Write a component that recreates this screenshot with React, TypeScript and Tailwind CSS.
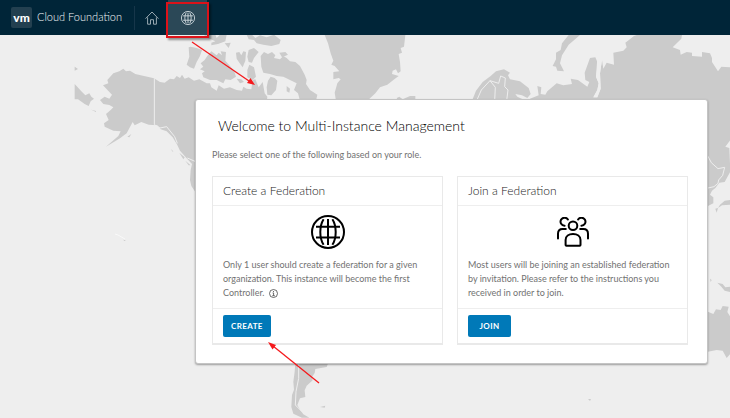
import React from "react";

type IconProps = { className?: string };

const GlobeIcon: React.FC<IconProps> = ({ className }) => (
  <svg
    viewBox="0 0 34 34"
    fill="none"
    stroke="currentColor"
    strokeWidth="2"
    className={className}
    aria-hidden="true"
  >
    <circle cx="17" cy="17" r="16" />
    <path d="M17 4v26M5 11.8h24M5 22.4h24" />
    <path d="M12.6 4.2C8.2 11 8.2 23 12.6 29.8M21.4 4.2C25.8 11 25.8 23 21.4 29.8" />
  </svg>
);

const HomeIcon: React.FC<IconProps> = ({ className }) => (
  <svg
    viewBox="0 0 14 14"
    fill="none"
    stroke="currentColor"
    strokeWidth="0.9"
    strokeLinecap="round"
    strokeLinejoin="round"
    className={className}
    aria-hidden="true"
  >
    <path d="M.8 7.4 7 1l6.2 6.4" />
    <path d="M2.6 6.8v6.4h2.9V8.7h3v4.5h2.9V6.8" />
  </svg>
);

const UsersIcon: React.FC<IconProps> = ({ className }) => (
  <svg
    viewBox="0 0 32 30"
    fill="none"
    stroke="currentColor"
    strokeWidth="2"
    strokeLinecap="round"
    className={className}
    aria-hidden="true"
  >
    <circle cx="16" cy="8.7" r="4.3" />
    <path d="M8.6 27.9v-5c0-3.7 3.2-5.9 7.4-5.9s7.5 2.2 7.5 5.9v5c0 .5-.3.8-.8.8H9.4c-.5 0-.8-.3-.8-.8Z" />
    <path d="M10.9 2.5A4 4 0 1 0 7.6 8.7" />
    <path d="M21.1 2.5A4 4 0 1 1 24.4 8.7" />
    <path d="M1 21.6v-4.8c0-3 1.8-4.7 4.6-4.7h3.2" />
    <path d="M31 21.6v-4.8c0-3-1.8-4.7-4.6-4.7h-3.2" />
  </svg>
);

const InfoIcon: React.FC<IconProps> = ({ className }) => (
  <svg
    viewBox="0 0 9 9"
    fill="none"
    stroke="currentColor"
    strokeWidth="0.8"
    className={className}
    aria-hidden="true"
  >
    <circle cx="4.5" cy="4.5" r="4" />
    <path d="M3.6 3.9h1v2.7M3.3 6.7h2.5M4.5 2v1" />
  </svg>
);

// Land masses, grouped by the part of the map they belong to
const WorldMap: React.FC = () => (
  <svg
    viewBox="0 35 730 383"
    preserveAspectRatio="xMinYMin slice"
    className="absolute inset-0 h-full w-full"
    fill="#cbcbcb"
    aria-hidden="true"
  >
    {/* Alaska, northern Canada and the Arctic islands */}
    <g transform="translate(70 30) scale(.33333)">
      <path d="M99 166 115 160 112 150 130 130 148 124 160 116 168 124 180 122 196 132 222 138 252 145 270 156 284 158 300 146 312 148 320 138 330 144 336 134 344 146 356 142 372 152 388 148 410 160 420 160 424 172 440 182 446 166 462 176 480 172 500 180 516 182 520 170 530 176 544 178 548 150 556 148 566 172 578 156 584 190 592 200 590 220 420 500 376 486 364 468 360 450 362 420 366 402 350 385 330 362 322 345 308 322 290 304 272 298 262 286 236 284 214 276 194 286 188 276 170 310 150 325 108 350 120 340 145 318 152 304 130 302 104 290 102 280 116 270 108 252 122 240 130 232 118 225 100 222 90 210 104 200 118 206 126 194 118 186Z" />
      <path d="M14 162 34 184 46 196 58 190 64 200 72 206 62 214 56 228 44 222 24 208 14 208ZM14 110 24 117 14 122ZM64 239 78 243 78 246ZM172 320 184 312 178 322ZM304 357 310 365 306 364ZM328 368 344 382 340 388ZM346 392 362 406 356 406Z" />
      <path d="M356 52 362 50 380 54 396 60 390 78 380 96 372 116 360 112 350 104 358 80Z" />
      <path d="M412 78 424 64 440 76 446 68 456 76 452 64 468 66 466 92 478 106 492 122 498 140 482 150 466 148 460 160 440 150 420 150 400 142 396 130 404 124 390 118 400 110 392 100 404 90Z" />
      <path d="M402 14 436 14 440 24 450 14 470 14 466 34 444 42 424 46 424 38 436 34 406 20ZM464 40 482 38 476 54ZM498 68 508 66 514 76 520 64 528 66 526 92 518 112 508 98 500 86ZM536 60 552 54 566 66 552 84 546 98 536 96 532 80ZM538 104 552 112 558 140 548 150 532 142 532 120ZM500 146 514 148 522 156 510 160Z" />
      <path d="M530 14 546 14 556 24 570 16 590 22 612 14 632 30 628 42 604 48 580 44 560 40 552 30 536 28ZM628 68 646 66 654 74 636 82ZM594 152 602 140 614 144 622 152 618 180 604 196 592 194 590 172ZM650 168 660 176 658 188 650 184Z" />
      <path d="M572 78 582 66 594 72 606 66 616 76 612 84 630 88 640 78 650 84 660 94 676 96 690 108 704 134 710 150 708 162 720 180 742 194 738 212 690 212 684 190 672 180 680 160 660 150 640 140 620 138 600 132 580 128 574 110Z" />
      <path
        d="M253 145V284L270 294 290 290 314 320 322 340M352 384 384 398"
        fill="none"
        stroke="#eeeeee"
        strokeWidth="3"
      />
    </g>

    {/* Greenland, Iceland and Scandinavia */}
    <g transform="translate(300 30) scale(.33333)">
      <path d="M74 15H316L312 50 302 54 306 68 296 72 300 96 302 124 294 130 288 118 278 122 276 132 296 138 280 150 262 164 240 172 226 190 202 212 108 212 104 188 112 160 122 148 116 144 100 148 100 126 118 124 104 108 94 104 100 92 92 70 84 40Z" />
      <path d="M290 204 298 200 308 208 330 198 346 198 346 212 294 212Z" />
      <path d="M516 212 528 182 548 156 572 138 588 124 612 118 630 128 624 136 630 148 660 154 686 174 692 192 682 204 666 196 646 192 652 200 678 212Z" />
      <path
        d="M530 212 544 180 570 152 586 172 584 212M570 152 596 160 602 138 616 144 614 170 624 180 620 212"
        fill="none"
        stroke="#eeeeee"
        strokeWidth="3"
      />
    </g>

    {/* Northern Russia */}
    <g transform="translate(510 30) scale(.33333)">
      <path d="M60 206 86 196 82 168 94 172 92 192 106 194 112 184 140 160 160 166 186 162 182 146 204 150 232 170 238 156 226 150 224 128 240 84 256 82 262 96 262 110 258 140 266 160 262 180 250 202 262 202 272 176 270 130 276 90 280 116 290 98 312 104 310 68 340 62 350 52 346 38 372 18 380 15H516L514 26 488 52 510 60 512 74 530 66 546 68 546 78 576 80 576 66 600 70 606 84 606 96 624 124 634 110 664 112V222H60Z" />
      <path d="M176 15 210 15 176 44 156 76 150 100 162 124 142 122 138 110 128 108 138 88 138 68 152 60 156 40Z" />
      <path
        d="M262 84 258 140 266 160 262 180 250 202 262 202 272 176 270 130 276 90Z"
        fill="#eeeeee"
      />
    </g>

    {/* East Asia and Australia */}
    <g transform="translate(690 100) scale(.33333)">
      <path d="M50 0H121V120L106 140 118 144 121 215 104 246 88 248 76 264 66 272 60 284 70 292 70 310 54 318 50 318Z" />
      <path d="M121 300V314L96 316 84 324 90 314 104 302ZM76 326 84 324 80 338ZM82 548 98 552 106 562 121 560V576L104 572 94 560ZM60 536 65 540 62 546Z" />
      <path d="M50 634 70 642 78 628 92 630 98 618 116 620 112 636 121 650V762L110 774 98 752 80 750 50 756Z" />
      <path
        d="M50 162 64 188 84 206 104 202 98 226 86 240 84 250 72 260 54 264"
        fill="none"
        stroke="#eeeeee"
        strokeWidth="3"
      />
    </g>

    {/* Southern tip of South America */}
    <g transform="translate(280 355) scale(.33333)">
      <path d="M46 20 146 20 140 36 106 42 104 54 96 66 98 76 80 92 74 106 76 126 60 130 52 150 60 164 70 178 88 188 66 188 40 176 34 156 36 120 42 104 40 80 44 50ZM120 156 136 152 134 158Z" />
      <path
        d="M56 20V70L48 110 46 150 66 170"
        fill="none"
        stroke="#eeeeee"
        strokeWidth="3"
      />
    </g>

    {/* Pacific islands */}
    <path d="M115 234 118 235 125 239" fill="none" stroke="#f9f9f9" />
    <path d="M123.5 239.5 126 241 124 241ZM588 399 591 399 590 401Z" />
  </svg>
);

type CardProps = {
  title: string;
  icon: React.ReactNode;
  action: string;
  children: React.ReactNode;
  pointer?: React.ReactNode;
};

const FederationCard: React.FC<CardProps> = ({
  title,
  icon,
  action,
  children,
  pointer,
}) => (
  <section className="flex flex-1 flex-col border border-b-2 border-[#e9e9e9] bg-white">
    <h2 className="border-b border-[#eeeeee] px-[10px] py-1 text-[12px] leading-5 font-light text-[#222222]">
      {title}
    </h2>
    <div className="flex-1 px-[10px] pt-2 pb-2">
      <div className="flex h-9 items-center justify-center text-black">
        {icon}
      </div>
      <p className="mt-2 text-[9px] leading-[14px] text-[#727272]">
        {children}
      </p>
    </div>
    <div className="border-t border-[#eeeeee] px-[10px] py-[6px]">
      <div className="relative w-fit">
        <button
          type="button"
          className="block h-[22px] min-w-[43px] rounded-[2px] bg-[#0079b8] px-2 text-[8px] font-bold tracking-wider text-white"
        >
          {action}
        </button>
        {pointer}
      </div>
    </div>
  </section>
);

const App: React.FC = () => {
  return (
    <div className="flex min-h-screen flex-col bg-[#eeeeee] font-['Lato',sans-serif]">
      <header className="relative z-10 flex h-[35px] items-center bg-[#002538] text-[#f2f5f7]">
        <div className="ml-[11px] flex size-[21px] items-center justify-center rounded-[2px] bg-[#234050] text-[12px] font-black text-white">
          vm
        </div>
        <span className="ml-[5px] w-[97px] text-[11px] font-light">
          Cloud Foundation
        </span>
        <nav className="flex h-full items-center">
          <div className="h-6 border-l border-[#16364a]" />
          <a
            href="#home"
            aria-label="Home"
            className="flex h-full w-[33px] items-center justify-center text-[#a9b8c0]"
          >
            <HomeIcon className="size-[14px]" />
          </a>
          <a
            href="#instances"
            aria-label="Multi-Instance Management"
            className="relative flex h-full w-[39px] items-center justify-center bg-[#2b4857] text-[#dfe6ea]"
          >
            <GlobeIcon className="size-[14px]" />
            <span className="absolute -left-[2px] top-[2px] h-9 w-[43px] border-2 border-[#dd1219] shadow-[2px_2px_2px_rgba(0,0,0,0.4)]" />
            <svg
              viewBox="0 0 66 46"
              className="absolute top-[41px] left-[23px] h-[46px] w-[66px]"
              aria-hidden="true"
            >
              <path d="M1 1 58 40" stroke="#f5191c" strokeWidth="1.3" />
              <path d="M64 44 56 42 59.5 37Z" fill="#f5191c" />
            </svg>
          </a>
        </nav>
      </header>

      <main className="relative flex-1">
        <WorldMap />
        <div className="relative mt-16 mr-[22px] mb-[54px] ml-[195px] rounded-[3px] border border-[#c4c4c4] bg-white pt-4 pr-[19px] pb-[18px] pl-4 shadow-[0_1px_2px_rgba(0,0,0,0.35)]">
          <h1 className="pl-[6px] text-[14px] leading-5 font-light text-black">
            Welcome to Multi-Instance Management
          </h1>
          <p className="mt-3 text-[9px] leading-[14px] text-[#727272]">
            Please select one of the following based on your role.
          </p>
          <div className="mt-[14px] flex gap-[14px]">
            <FederationCard
              title="Create a Federation"
              icon={<GlobeIcon className="size-[34px]" />}
              action="CREATE"
              pointer={
                <svg
                  viewBox="0 0 54 46"
                  className="absolute top-[25px] left-[44px] h-[46px] w-[54px]"
                  aria-hidden="true"
                >
                  <path d="M6 6 52 43" stroke="#f5191c" strokeWidth="1.3" />
                  <path d="M1 2 9 5 5.5 9.5Z" fill="#f5191c" />
                </svg>
              }
            >
              Only 1 user should create a federation for a given organization.
              This instance will become the first Controller.
              <InfoIcon className="ml-[5px] inline size-[9px] text-[#444444]" />
            </FederationCard>
            <FederationCard
              title="Join a Federation"
              icon={<UsersIcon className="h-[30px] w-8" />}
              action="JOIN"
            >
              Most users will be joining an established federation by
              invitation. Please refer to the instructions you received in order
              to join.
            </FederationCard>
          </div>
        </div>
      </main>
    </div>
  );
};

export default App;
